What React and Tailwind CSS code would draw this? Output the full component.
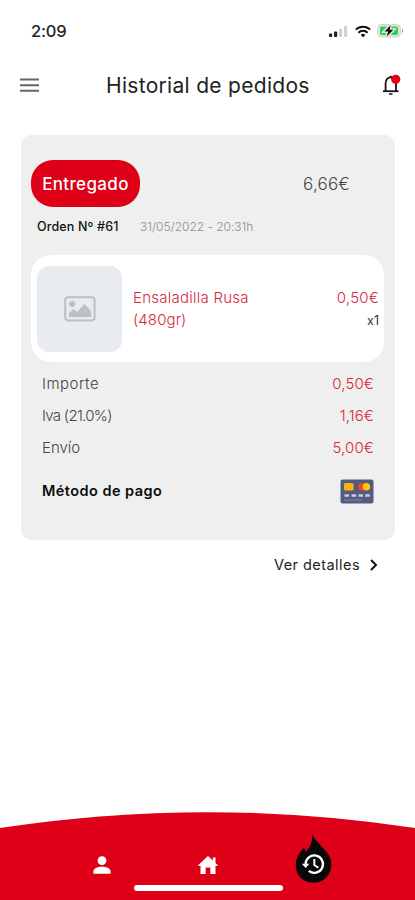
const ROWS = [
  { label: "Importe", value: "0,50€", labelStyle: "tracking-[0.5px]" },
  { label: "Iva (21.0%)", value: "1,16€", labelStyle: "tracking-[-0.7px]" },
  { label: "Envío", value: "5,00€", labelStyle: "tracking-[0px]" },
];

function StatusBar() {
  return (
    <div className="h-[62px] pl-[30px] pr-[11px] flex items-center justify-between">
      <span className="text-[16.5px] font-medium text-[#222] tracking-[-0.2px] pt-px pl-px">2:09</span>
      <div className="flex items-center">
        <svg width="19" height="13" viewBox="0 0 19 13" className="mr-[7px]">
          <rect x="0" y="8.5" width="3.2" height="3.5" rx="0.8" fill="#222" />
          <rect x="5" y="6.5" width="3.2" height="5.5" rx="0.8" fill="#222" />
          <rect x="10" y="3.5" width="3.2" height="8.5" rx="0.8" fill="#d2d2d2" />
          <rect x="15" y="1" width="3.2" height="11" rx="0.8" fill="#d2d2d2" />
        </svg>
        <svg width="16" height="13" viewBox="0 0 16 13" fill="none" stroke="#111" strokeWidth="2" className="mr-[6px]">
          <path d="M0.8 4.6a10.4 10.4 0 0 1 14.4 0" />
          <path d="M3.4 7.7a6.6 6.6 0 0 1 9.2 0" />
          <path d="M8 12.3 5.7 9.9a3.4 3.4 0 0 1 4.6 0Z" fill="#111" stroke="none" />
        </svg>
        <svg width="27" height="14" viewBox="0 0 27 14">
          <rect x="0.5" y="0.5" width="23" height="12.5" rx="4" fill="#e0e4e0" stroke="#d2d2d2" />
          <path d="M25 5v4c1.6-.7 1.6-3.3 0-4Z" fill="#999" />
          <rect x="3" y="2.5" width="18" height="8.5" rx="1.8" fill="#27d34b" />
          <path d="M13.5 0.8 7.3 7.6h3.7l-1.3 5.2 6.9-7.1h-3.7Z" fill="none" stroke="#e0e4e0" strokeWidth="3" />
          <path d="M13.7 1.2 7.6 7.6h3.5l-1.3 4.8 6.5-6.7h-3.6Z" fill="#111" />
        </svg>
      </div>
    </div>
  );
}

function Header() {
  return (
    <header className="h-[46px] flex items-center pl-5 pr-[14px]">
      <svg width="20" height="14" viewBox="0 0 20 14" fill="none" stroke="#666" strokeWidth="2">
        <path d="M0 1.5h19M0 7.3h19M0 12.8h19" />
      </svg>
      <h1 className="ml-[66px] pt-px text-[21px] font-normal text-[#222] tracking-[0.3px] whitespace-nowrap">Historial de pedidos</h1>
      <svg width="19" height="22" viewBox="0 0 19 22" fill="none" className="ml-auto shrink-0">
        <path d="M3.6 17V9.2C3.6 5.5 6 3.3 8.8 3.3s5.2 2.2 5.2 5.9V17" stroke="#161616" strokeWidth="1.8" />
        <path d="M1 17.2h15.6" stroke="#161616" strokeWidth="1.8" />
        <path d="M8.8 3.4V1.8" stroke="#161616" strokeWidth="2" />
        <path d="M6.7 19.2h4.2c-.3 2.3-3.9 2.3-4.2 0Z" fill="#161616" />
        <circle cx="13.7" cy="5.3" r="4.6" fill="#e50012" />
      </svg>
    </header>
  );
}

function ImageIcon() {
  return (
    <svg width="32" height="26" viewBox="0 0 32 26" fill="none">
      <rect x="1.2" y="1.2" width="29.4" height="23.2" rx="2.8" stroke="#bcc0c3" strokeWidth="2" />
      <circle cx="8.2" cy="8" r="3" fill="#bcc0c3" />
      <path d="M5 21v-3.7l4.7-4.6 3.3 3.3L20.4 8l6.8 7.2V21Z" fill="#bcc0c3" />
    </svg>
  );
}

function CreditCardIcon() {
  return (
    <svg width="34" height="25" viewBox="0 0 34 25">
      <rect x="0.5" y="0.5" width="33" height="24" rx="2" fill="#535c80" />
      <rect x="4" y="4" width="9.5" height="7.5" rx="1.5" fill="#ffb60d" />
      <path d="M7 4v7.5M10.5 4v7.5" stroke="#f0a512" strokeWidth="0.8" />
      <circle cx="22" cy="7.7" r="3.7" fill="#f04a18" />
      <circle cx="26.4" cy="7.7" r="3.7" fill="#ffc414" />
      <path d="M4.5 16.5h4.5M11.5 16.5h4.5M18.5 16.5h4.5M25.3 16.5h4.5" stroke="#c9cedd" strokeWidth="2.6" />
      <path d="M4 21h17.5" stroke="#838aa5" strokeWidth="1" />
    </svg>
  );
}

function OrderCard() {
  return (
    <section className="ml-[21px] mr-5 mt-[27px] h-[405px] rounded-[10px] bg-[#efefef] px-[10px] pt-[25px]">
      <div className="flex items-center justify-between">
        <span className="w-[109px] h-[47px] rounded-[22px] bg-[#dd0016] text-white text-[17px] font-medium flex items-center justify-center tracking-[0.35px] pt-[2px]">
          Entregado
        </span>
        <span className="text-[17px] text-[#444] font-light mr-[35px] tracking-[0.2px] pt-[3px]">6,66€</span>
      </div>

      <div className="flex items-center mt-[11px] h-[18px] pl-[6px]">
        <span className="w-[103px] text-[12.5px] font-medium text-[#111] tracking-[0.15px]">Orden Nº #61</span>
        <span className="text-[12px] font-light text-[#8d8d8d] tracking-[-0.03px]">31/05/2022 - 20:31h</span>
      </div>

      <div className="mt-[19px] h-[107px] -mr-px w-[353px] rounded-[20px] bg-white flex items-center pl-[6px] pr-[5px]">
        <div className="w-[85px] h-[86px] shrink-0 rounded-[12px] bg-[#e8ecf0] flex items-center justify-center">
          <ImageIcon />
        </div>
        <div className="ml-[11px] flex-1 text-[15px] leading-[22px] text-[#d5293a] font-light">
          <p className="tracking-[0.25px]">Ensaladilla Rusa</p>
          <p className="tracking-[0.1px]">(480gr)</p>
        </div>
        <div className="text-right pt-[3px]">
          <p className="text-[15px] leading-[22px] text-[#d5293a] font-light tracking-[0.2px]">0,50€</p>
          <p className="text-[12.5px] leading-[24px] text-[#333]">x1</p>
        </div>
      </div>

      <div className="mt-[6px] pl-[11px] pr-[11px]">
        {ROWS.map((r) => (
          <div key={r.label} className="h-8 flex items-center justify-between text-[15px] font-light">
            <span className={`text-[#444] ${r.labelStyle}`}>{r.label}</span>
            <span className="text-[#d5293a] tracking-[0.1px]">{r.value}</span>
          </div>
        ))}
        <div className="mt-[14px] flex items-center justify-between h-[26px]">
          <span className="text-[14.5px] font-semibold text-[#0c0c0c] tracking-[0.45px]">Método de pago</span>
          <CreditCardIcon />
        </div>
      </div>
    </section>
  );
}

function BottomNav() {
  return (
    <nav className="relative mt-auto h-[88px] overflow-hidden">
      <svg width="415" height="88" viewBox="0 0 415 88" className="absolute inset-0">
        <path d="M0 16Q207.5 -15.6 415 16V88H0Z" fill="#dd0016" />
      </svg>
      <div className="relative h-full flex flex-col">
        <div className="h-[73px] grid grid-cols-[93px_18px_86px_22px_76px_38px] items-end">
          <span />
          <svg width="18" height="18" viewBox="0 0 18 18" fill="#fff" className="mb-[11px]">
            <circle cx="9" cy="4.6" r="4.4" />
            <path d="M0.4 17.7v-2.1c0-3 3.6-4.8 8.6-4.8s8.6 1.8 8.6 4.8v2.1Z" />
          </svg>
          <span />
          <svg width="22" height="18" viewBox="0 0 22 18" fill="#fff" className="mb-[11px]">
            <path d="M11 0 0.5 9.7h3V18h5.2v-6.5h4.6V18h5.2V9.7h3l-3-2.8V1.4h-2.6v3Z" />
          </svg>
          <span />
          <svg width="38" height="50" viewBox="0 0 38 50" className="mb-[2px]">
            <path d="M16.8 0.4C19.5 8 29 13.5 34.5 23.5c2 4 2.5 9.5.7 14.2C32.5 45.5 26.5 49.6 18.5 49.6S4 45.3 1.7 38.2C-.7 30.5 1.4 22.8 8.3 15.6c.4-.5 1.2-.6 1.4.4l1 2.6c4.5-4.3 7.4-10.2 6.1-18.2Z" fill="#080808" />
            <path d="M10.6 31.2a8.7 8.7 0 1 1 3.2 6.7" fill="none" stroke="#fff" strokeWidth="2.3" />
            <path d="M6.8 30.8h7.6l-3.8 4.3Z" fill="#fff" />
            <path d="M19.3 26V32l4 2.8" fill="none" stroke="#fff" strokeWidth="2" />
          </svg>
        </div>
        <div className="ml-[134px] w-[149px] h-[6px] rounded-full bg-white" />
      </div>
    </nav>
  );
}

export default function App() {
  return (
    <div className="w-[415px] h-[900px] bg-white font-['Inter',sans-serif] flex flex-col overflow-hidden">
      <StatusBar />
      <Header />
      <OrderCard />
      <button className="self-end mr-[37px] mt-[15px] h-[20px] flex items-center text-[14.5px] tracking-[0.45px] text-[#222]">
        Ver detalles
        <svg width="8" height="12" viewBox="0 0 8 12" fill="none" stroke="#111" strokeWidth="2" className="ml-[10px]">
          <path d="M1 1l5 5-5 5" />
        </svg>
      </button>
      <BottomNav />
    </div>
  );
}
